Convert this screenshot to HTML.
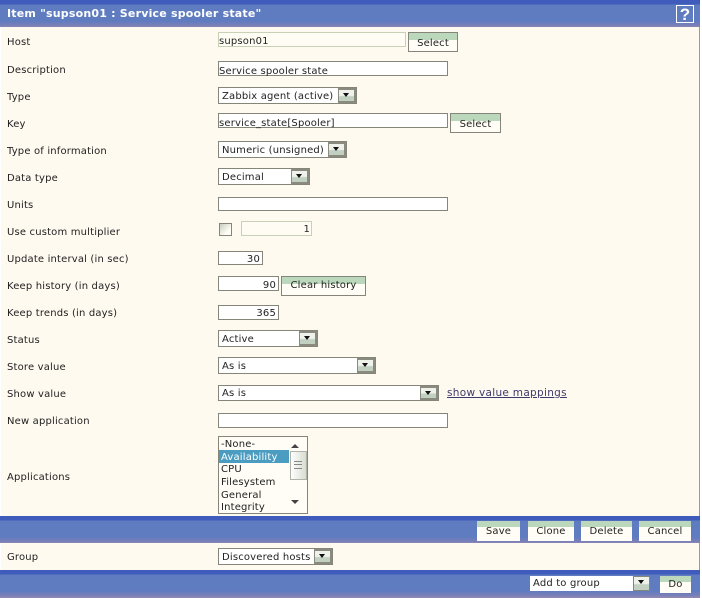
<!DOCTYPE html>
<html><head><meta charset="utf-8"><style>
html,body{margin:0;padding:0}
body{width:702px;height:598px;overflow:hidden;background:#fff;position:relative;font-family:"DejaVu Sans","Liberation Sans",sans-serif;font-size:10px;letter-spacing:.17px;color:#222}
#wrap{position:absolute;left:0;top:0;width:702px;height:598px}
#wrap div,#wrap a{position:absolute;box-sizing:border-box;white-space:nowrap}
.bg{left:1px;top:0;width:698px;height:598px;background:#fffaf0}
.bar{left:0;width:700px;background:linear-gradient(#3f5cbc 0,#3f5cbc 4px,#5f7cc0 5px,#5f7cc0 21px,#7d80b8 26px,#8f88b0 27px)}
.l{left:7px;height:14px;line-height:14px;margin-top:4px}
.i{background:#fff;border:1px solid #85857a;line-height:20px;padding-left:0;height:15px}
.r{text-align:right;padding-right:2px;line-height:16px}
.s{background:#fff;border:1px solid #85857a;line-height:17px;padding-left:3px}
.a{right:0;top:0;bottom:0;width:18px;border:2px solid #8a8a7e;border-left-width:1px;background:linear-gradient(#eef2ea 0,#eef2ea 50%,#c2d0c2 60%,#c2d0c2)}
.a::after{content:"";position:absolute;left:4px;top:3px;border-left:3.5px solid transparent;border-right:3.5px solid transparent;border-top:4px solid #111}
.b{background:linear-gradient(#bcd8bc 0,#bcd8bc 7px,#fffdf5 7px);border:1px solid #85857a;text-align:center;line-height:21px;height:20px}
.k{background:linear-gradient(#bcd8bc 0,#bcd8bc 6px,#fffdf5 6px);text-align:center;line-height:21px;height:20px;color:#222}
.o{left:0;width:70px;height:13px;line-height:15px;padding-left:2px}
</style></head><body><div id="wrap">
<div class="bg"></div>
<div style="left:699px;top:0;width:1px;height:598px;background:#9a96b8"></div>

<div class="bar" style="top:0;height:27px"></div>
<div style="left:7px;top:6px;height:16px;line-height:16px;font-weight:bold;font-size:11px;color:#fff;letter-spacing:.2px">Item "supson01 : Service spooler state"</div>
<div style="left:676px;top:5px;width:18px;height:18px;border:1px solid #fff;color:#fff;font:bold 17px/17px 'Liberation Sans',sans-serif;text-align:center;letter-spacing:0">?</div>

<div class="l" style="top:32px">Host</div>
<div class="i" style="left:218px;top:32px;width:188px;border-color:#c8d0b8;background:#fffdf3;line-height:17px">supson01</div>
<div class="b" style="left:408px;top:32px;width:50px">Select</div>

<div class="l" style="top:60px">Description</div>
<div class="i" style="left:218px;top:61px;width:230px">Service spooler state</div>

<div class="l" style="top:87px">Type</div>
<div class="s" style="left:218px;top:87px;width:139px;height:17px">Zabbix agent (active)<div class="a"></div></div>

<div class="l" style="top:114px">Key</div>
<div class="i" style="left:218px;top:113px;width:230px">service_state[Spooler]</div>
<div class="b" style="left:450px;top:113px;width:51px">Select</div>

<div class="l" style="top:141px">Type of information</div>
<div class="s" style="left:218px;top:141px;width:129px;height:17px">Numeric (unsigned)<div class="a"></div></div>

<div class="l" style="top:168px">Data type</div>
<div class="s" style="left:218px;top:168px;width:92px;height:17px">Decimal<div class="a"></div></div>

<div class="l" style="top:195px">Units</div>
<div class="i" style="left:218px;top:197px;width:230px;height:14px"></div>

<div class="l" style="top:222px">Use custom multiplier</div>
<div style="left:219px;top:223px;width:13px;height:13px;border:1px solid #85857a;background:linear-gradient(135deg,#c8ccc0,#fffdf5 70%)"></div>
<div class="i r" style="left:241px;top:221px;width:71px;border-color:#c8d0b8;background:#fffdf3;padding-right:1px">1</div>

<div class="l" style="top:249px">Update interval (in sec)</div>
<div class="i r" style="left:218px;top:251px;width:45px;height:14px;line-height:15px">30</div>

<div class="l" style="top:276px">Keep history (in days)</div>
<div class="i r" style="left:218px;top:276px;width:61px;line-height:18px">90</div>
<div class="b" style="left:281px;top:276px;width:85px;line-height:17px">Clear history</div>

<div class="l" style="top:303px">Keep trends (in days)</div>
<div class="i r" style="left:218px;top:305px;width:61px">365</div>

<div class="l" style="top:330px">Status</div>
<div class="s" style="left:218px;top:330px;width:100px;height:17px">Active<div class="a"></div></div>

<div class="l" style="top:357px">Store value</div>
<div class="s" style="left:218px;top:357px;width:158px;height:17px">As is<div class="a"></div></div>

<div class="l" style="top:384px">Show value</div>
<div class="s" style="left:218px;top:385px;width:221px;height:16px;line-height:16px">As is<div class="a"></div></div>
<a style="left:447px;top:386px;line-height:14px;font-size:10.5px;letter-spacing:.3px;color:#3c3a6c;text-decoration:underline">show value mappings</a>

<div class="l" style="top:411px">New application</div>
<div class="i" style="left:218px;top:413px;width:230px"></div>

<div class="l" style="top:467px">Applications</div>
<div style="left:218px;top:436px;width:90px;height:78px;border:1px solid #85857a;background:#fffdf5">
 <div class="o" style="top:0">-None-</div>
 <div class="o" style="top:13px;background:#4a9cc0;color:#fff">Availability</div>
 <div class="o" style="top:25px">CPU</div>
 <div class="o" style="top:38px">Filesystem</div>
 <div class="o" style="top:51px">General</div>
 <div class="o" style="top:63px">Integrity</div>
 <div style="left:72px;top:7px;border-left:4px solid transparent;border-right:4px solid transparent;border-bottom:4px solid #444"></div>
 <div style="left:71px;top:14px;width:17px;height:29px;background:linear-gradient(90deg,#fff,#d8dcd0);border:1px solid #b0b4a8"></div>
 <div style="left:75px;top:24px;width:8px;height:8px;border-top:1px solid #888;border-bottom:1px solid #888"></div>
 <div style="left:75px;top:27px;width:8px;height:1px;background:#888"></div>
 <div style="left:72px;top:63px;border-left:4px solid transparent;border-right:4px solid transparent;border-top:4px solid #444"></div>
</div>

<div class="bar" style="top:516px;height:27px"></div>
<div class="k" style="left:477px;top:521px;width:43px">Save</div>
<div class="k" style="left:528px;top:521px;width:46px">Clone</div>
<div class="k" style="left:581px;top:521px;width:51px">Delete</div>
<div class="k" style="left:639px;top:521px;width:52px">Cancel</div>

<div class="l" style="top:547px">Group</div>
<div class="s" style="left:218px;top:548px;width:115px;height:17px">Discovered hosts<div class="a"></div></div>

<div class="bar" style="top:570px;height:28px"></div>
<div class="s" style="left:530px;top:576px;width:120px;height:15px;border:0;line-height:16px">Add to group<div class="a" style="border:1px solid #85857a;width:17px"></div></div>
<div class="k" style="left:660px;top:576px;width:31px;height:17px;line-height:18px">Do</div>
</div></body></html>
